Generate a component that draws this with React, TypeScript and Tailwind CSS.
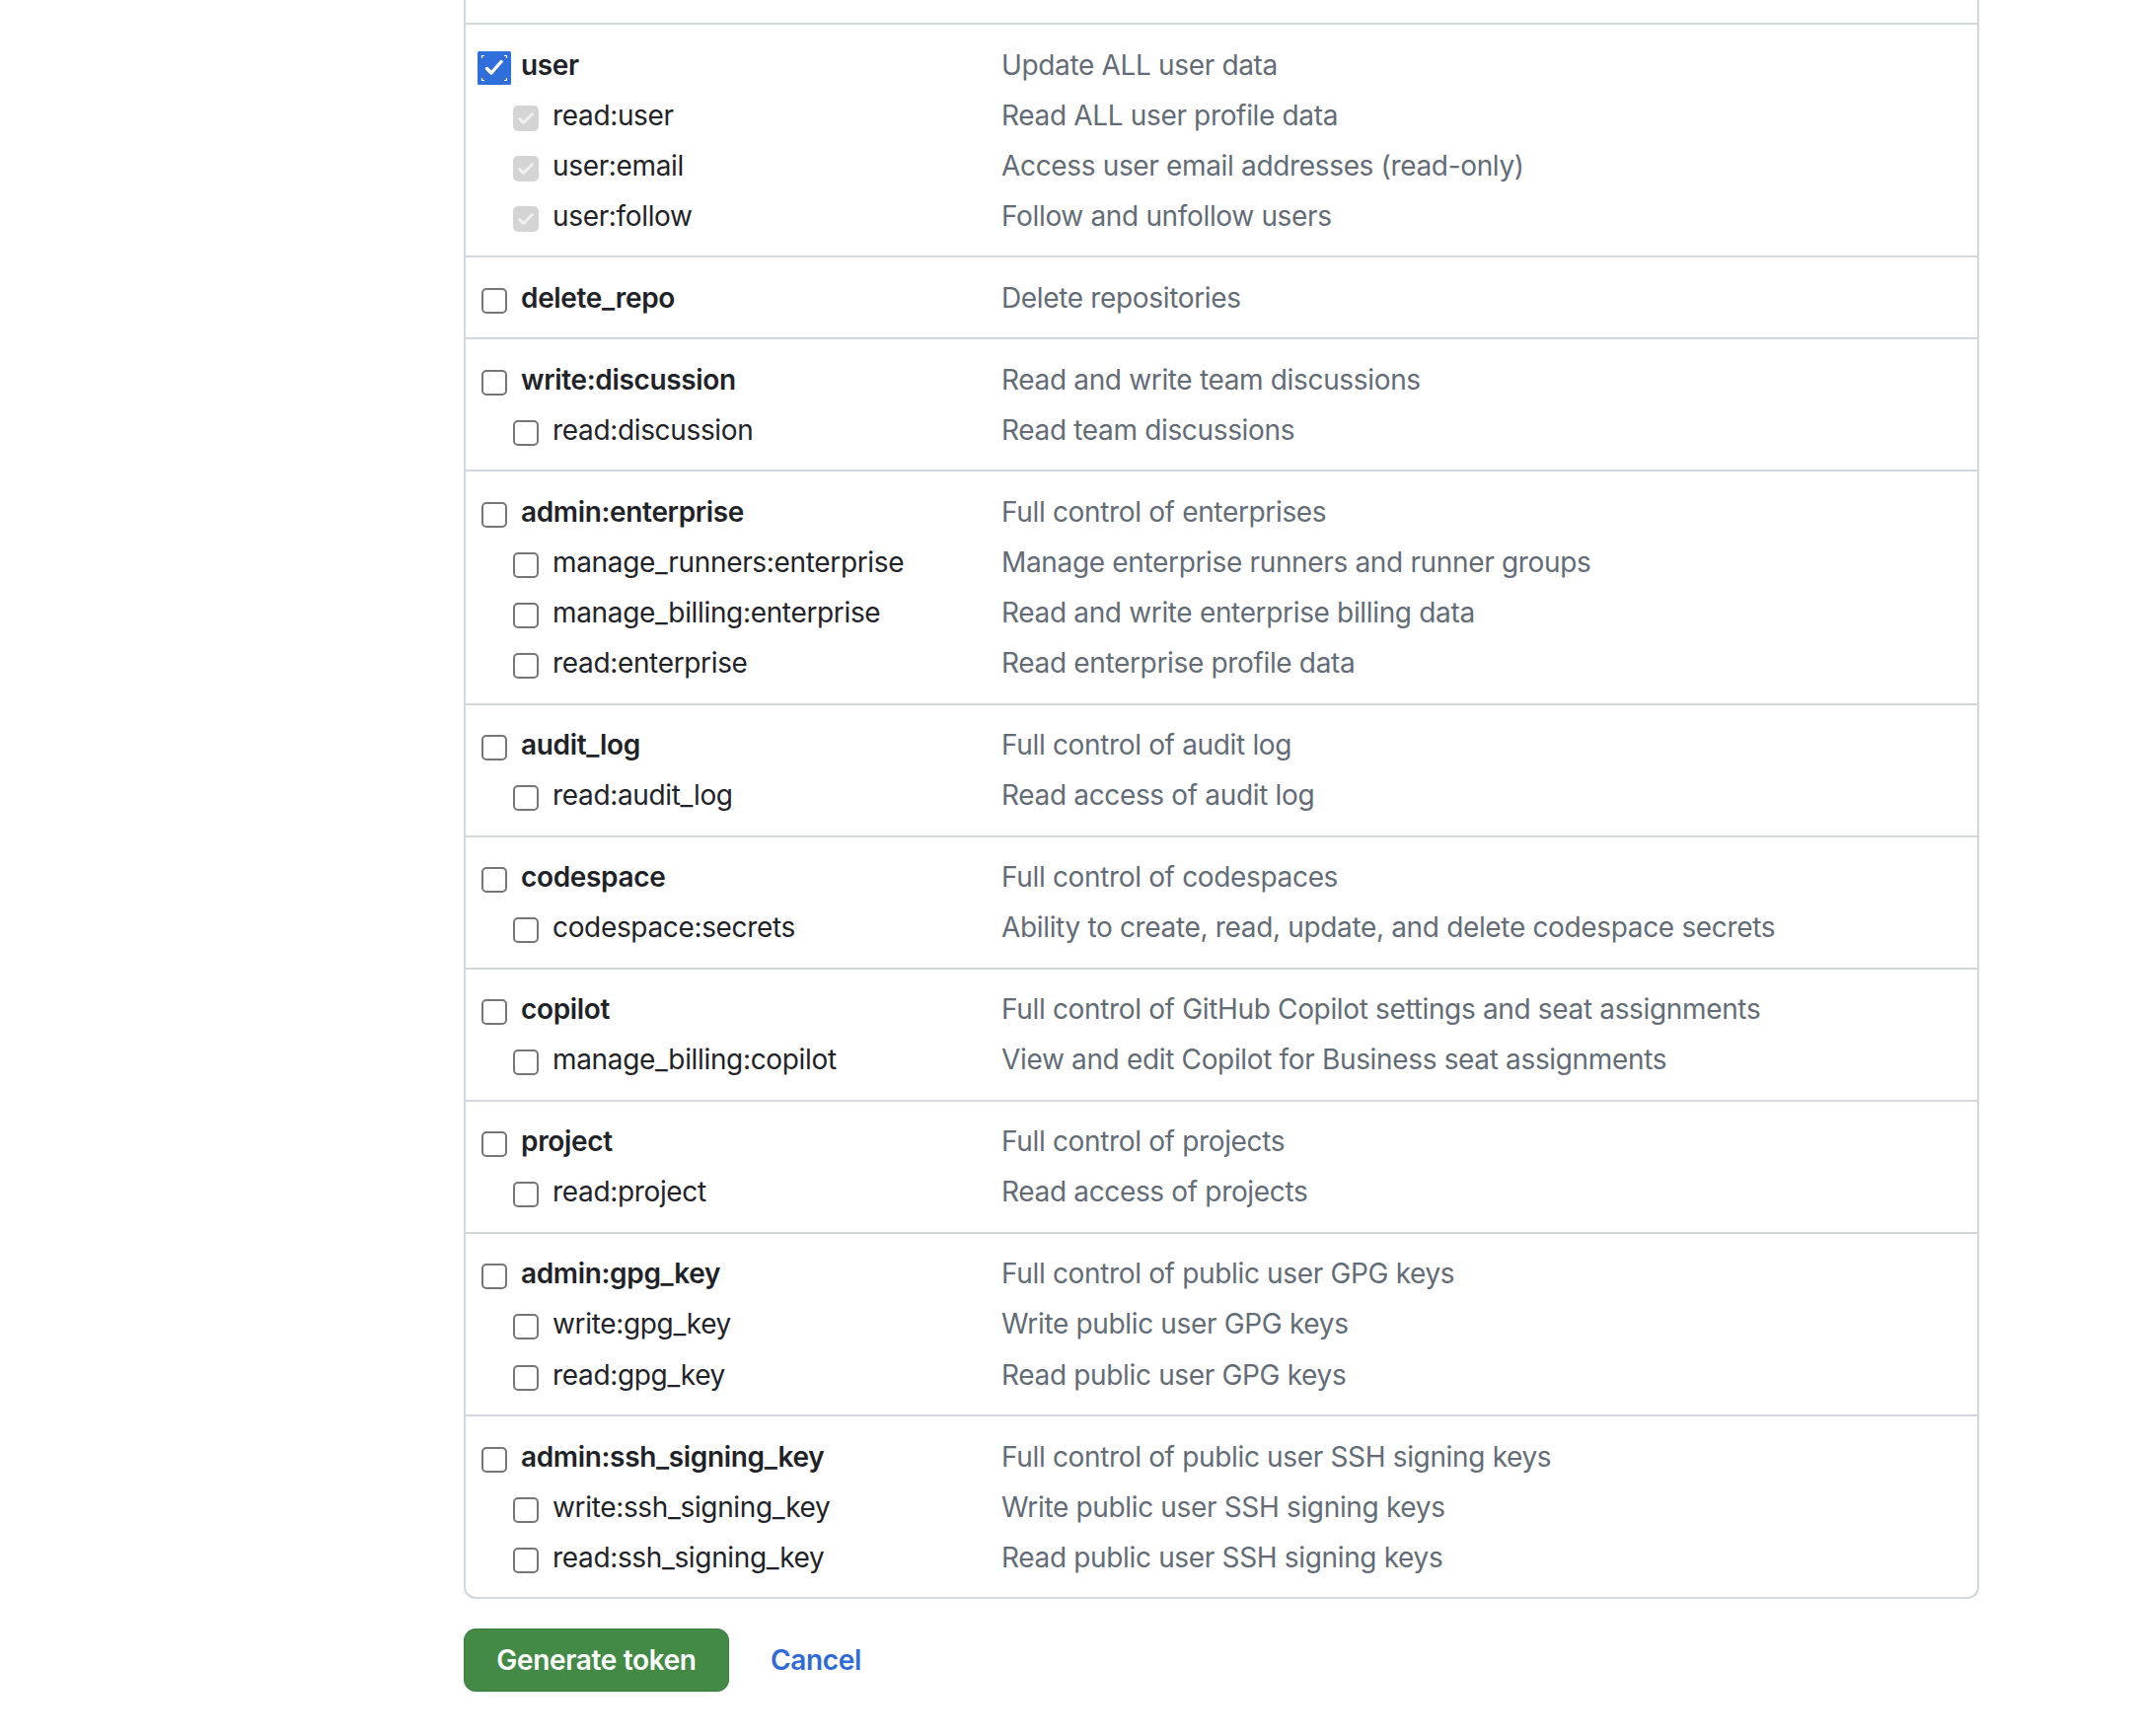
type Scope = {
  name: string
  desc: string
  checked?: boolean
  children?: [string, string][]
}

const scopes: Scope[] = [
  {
    name: 'user',
    desc: 'Update ALL user data',
    checked: true,
    children: [
      ['read:user', 'Read ALL user profile data'],
      ['user:email', 'Access user email addresses (read-only)'],
      ['user:follow', 'Follow and unfollow users'],
    ],
  },
  { name: 'delete_repo', desc: 'Delete repositories' },
  {
    name: 'write:discussion',
    desc: 'Read and write team discussions',
    children: [['read:discussion', 'Read team discussions']],
  },
  {
    name: 'admin:enterprise',
    desc: 'Full control of enterprises',
    children: [
      ['manage_runners:enterprise', 'Manage enterprise runners and runner groups'],
      ['manage_billing:enterprise', 'Read and write enterprise billing data'],
      ['read:enterprise', 'Read enterprise profile data'],
    ],
  },
  {
    name: 'audit_log',
    desc: 'Full control of audit log',
    children: [['read:audit_log', 'Read access of audit log']],
  },
  {
    name: 'codespace',
    desc: 'Full control of codespaces',
    children: [['codespace:secrets', 'Ability to create, read, update, and delete codespace secrets']],
  },
  {
    name: 'copilot',
    desc: 'Full control of GitHub Copilot settings and seat assignments',
    children: [['manage_billing:copilot', 'View and edit Copilot for Business seat assignments']],
  },
  {
    name: 'project',
    desc: 'Full control of projects',
    children: [['read:project', 'Read access of projects']],
  },
  {
    name: 'admin:gpg_key',
    desc: 'Full control of public user GPG keys',
    children: [
      ['write:gpg_key', 'Write public user GPG keys'],
      ['read:gpg_key', 'Read public user GPG keys'],
    ],
  },
  {
    name: 'admin:ssh_signing_key',
    desc: 'Full control of public user SSH signing keys',
    children: [
      ['write:ssh_signing_key', 'Write public user SSH signing keys'],
      ['read:ssh_signing_key', 'Read public user SSH signing keys'],
    ],
  },
]

function CheckedBox() {
  // focused native checkbox: blue fill, ring, dashed corners
  return (
    <div className="w-[26px] h-[26px] mt-[6px] shrink-0 flex items-center justify-center">
      <svg width="34" height="34" viewBox="0 0 34 34" className="shrink-0">
        <rect x="0" y="0" width="34" height="34" rx="1.5" fill="#2f6edb" />
        <g stroke="#ffffff" strokeWidth="1.2" fill="none">
          <path d="M4.5 7V4.5H7" />
          <path d="M27 4.5H29.5V7" />
          <path d="M29.5 27V29.5H27" />
          <path d="M7 29.5H4.5V27" />
        </g>
        <path d="M9.5 17.5L14 22L24 10.5" stroke="#ffffff" strokeWidth="3.4" fill="none" strokeLinecap="round" strokeLinejoin="round" />
      </svg>
    </div>
  )
}

function DisabledBox() {
  return (
    <div className="w-[26px] h-[26px] mt-[6px] shrink-0 rounded-[5px] bg-[#d4d4d4] flex items-center justify-center">
      <svg width="26" height="26" viewBox="0 0 26 26">
        <path d="M6.5 13.5L10.5 17.5L19.5 8.5" stroke="#f2f2f2" strokeWidth="2.6" fill="none" strokeLinecap="round" strokeLinejoin="round" />
      </svg>
    </div>
  )
}

function EmptyBox() {
  return <div className="w-[26px] h-[26px] mt-[6px] shrink-0 rounded-[5px] border-2 border-[#767676] bg-white" />
}

function Row({ name, desc, parent, checked, disabled }: { name: string; desc: string; parent?: boolean; checked?: boolean; disabled?: boolean }) {
  return (
    <div className="grid grid-cols-[543px_1fr] h-[51.06px] items-center">
      <div className={`flex items-center gap-[14px] ${parent ? 'pl-[16px]' : 'pl-[48px]'}`}>
        {checked ? <CheckedBox /> : disabled ? <DisabledBox /> : <EmptyBox />}
        <span className={parent ? 'font-semibold text-[#1f2328]' : 'text-[#1f2328]'}>{name}</span>
      </div>
      <div className="text-[#636c76]">{desc}</div>
    </div>
  )
}

export default function App() {
  return (
    <div className="min-h-[1760px] bg-white font-['Inter',sans-serif] text-[28px] leading-[36px] tracking-[-0.34px]">
      <div className="ml-[470px] w-[1536px]">
        {/* Scopes box */}
        <div className="border-x-2 border-b-2 border-[#d0d7de] rounded-b-[12px]">
          <div className="h-[23px]" />
          {scopes.map((s) => (
            <div key={s.name} className="border-t-2 border-[#d0d7de] py-[15px]">
              <Row name={s.name} desc={s.desc} parent checked={s.checked} />
              {s.children?.map(([n, d]) => (
                <Row key={n} name={n} desc={d} disabled={s.checked} />
              ))}
            </div>
          ))}
        </div>

        {/* Actions */}
        <div className="mt-[30px] flex items-center gap-[42px]">
          <button className="h-[64px] w-[269px] rounded-[12px] bg-[#438a47] border border-[#3a7a3e] text-white font-semibold shadow-[0_1px_0_rgba(31,35,40,0.1)]">
            Generate token
          </button>
          <a href="#" className="text-[#2f6ad9] font-semibold">
            Cancel
          </a>
        </div>
      </div>
    </div>
  )
}
